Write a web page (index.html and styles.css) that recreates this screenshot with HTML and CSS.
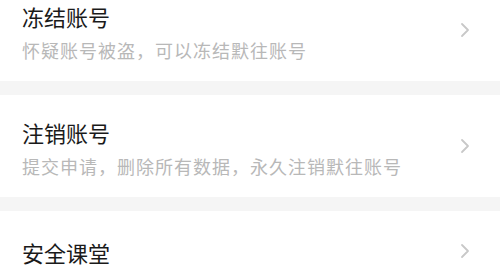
FILE: index.html
```html
<!DOCTYPE html>
<html>
<head>
  <meta charset="UTF-8">
  <title>账号安全</title>
  <link rel="stylesheet" href="styles.css">
</head>
<body>
  <div class="list">
    <a class="item first" href="#">
      <div class="text">
        <div class="title">冻结账号</div>
        <div class="desc">怀疑账号被盗，可以冻结默往账号</div>
      </div>
      <svg class="arrow" viewBox="0 0 10 16" width="10" height="16"><path d="M2 2l6 6-6 6" fill="none" stroke="#c8c8c8" stroke-width="1.8" stroke-linecap="round" stroke-linejoin="round"/></svg>
    </a>
    <div class="gap"></div>
    <a class="item" href="#">
      <div class="text">
        <div class="title">注销账号</div>
        <div class="desc">提交申请，删除所有数据，永久注销默往账号</div>
      </div>
      <svg class="arrow" viewBox="0 0 10 16" width="10" height="16"><path d="M2 2l6 6-6 6" fill="none" stroke="#c8c8c8" stroke-width="1.8" stroke-linecap="round" stroke-linejoin="round"/></svg>
    </a>
    <div class="gap"></div>
    <a class="item single" href="#">
      <div class="text">
        <div class="title">安全课堂</div>
      </div>
      <svg class="arrow" viewBox="0 0 10 16" width="10" height="16"><path d="M2 2l6 6-6 6" fill="none" stroke="#c8c8c8" stroke-width="1.8" stroke-linecap="round" stroke-linejoin="round"/></svg>
    </a>
  </div>
</body>
</html>
```

FILE: styles.css
```css
html {
  background: #f5f5f5;
}
body {
  margin: 0;
  font-family: "Noto Sans CJK SC", "Noto Sans", sans-serif;
  overflow: hidden;
}
.list {
  margin-top: -21px;
}
.item {
  display: flex;
  align-items: center;
  height: 102px;
  padding: 4px 30px 0 22px;
  background: #fff;
  text-decoration: none;
  box-sizing: border-box;
}
.item .arrow {
  margin-top: -4px;
}
.item.single {
  height: 80px;
  padding-top: 2px;
}
.item.single .arrow {
  margin-top: -2px;
}
.text {
  flex: 1;
}
.title {
  font-size: 22px;
  line-height: 30px;
  color: #1a1a1a;
}
.desc {
  margin-top: 5px;
  font-size: 18px;
  line-height: 28px;
  letter-spacing: 1px;
  color: #b8b8b8;
}
.gap {
  height: 14px;
}
```
